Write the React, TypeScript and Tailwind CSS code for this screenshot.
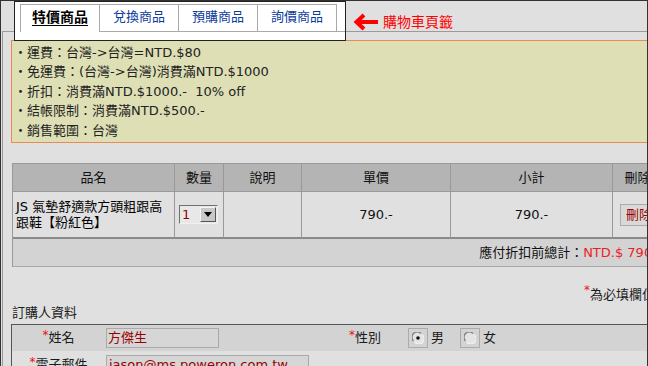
import React from "react";

const notices = [
  "・運費：台灣->台灣=NTD.$80",
  "・免運費：(台灣->台灣)消費滿NTD.$1000",
  "・折扣：消費滿NTD.$1000.-  10% off",
  "・結帳限制：消費滿NTD.$500.-",
  "・銷售範圍：台灣",
];

const tabs = ["兌換商品", "預購商品", "詢價商品"];

function Star() {
  return <span className="relative -top-[3px] text-[12px] leading-none text-[#ee1111]">*</span>;
}

function Radio({ checked }: { checked?: boolean }) {
  return (
    <span className="flex h-[20px] w-[20px] items-center justify-center border border-[#ababab]">
      <svg width="12" height="12" viewBox="0 0 12 12">
        <circle cx="6" cy="6" r="5.5" fill="#e4e4e4" />
        <path d="M1.5 9 A5 5 0 0 1 9 1.5" fill="none" stroke="#7a7a7a" strokeWidth="1.2" />
        <path d="M10.5 3 A5 5 0 0 1 3 10.5" fill="none" stroke="#f4f4f4" strokeWidth="1.2" />
        {checked && <circle cx="6" cy="6" r="1.8" fill="#111" />}
      </svg>
    </span>
  );
}

export default function App() {
  return (
    <div className="h-[366px] w-[648px] overflow-hidden border-x border-t border-[#333] bg-[#e0e0e0] font-['DejaVu_Sans','Noto_Sans_CJK_TC',sans-serif] text-[13px] text-[#1a1a1a]">
      <div className="relative z-10 flex h-[30px] items-start">
        <div className="ml-[13px] h-[40px] w-[332px] shrink-0 border border-[#222] bg-white pl-[5px] pt-[2px]">
          <div className="flex">
            <div className="flex h-[28px] w-[79px] items-center justify-center border-l border-t border-[#a9a9a9] bg-white pb-[2px] text-[14px] font-bold text-black underline underline-offset-[3px]">
              特價商品
            </div>
            {tabs.map((t, i) => (
              <div
                key={t}
                className={
                  i === tabs.length - 1
                    ? "flex h-[28px] w-[80px] items-center justify-center border-x border-y border-[#a9a9a9] pb-[2px] text-[#0b3b9c]"
                    : "flex h-[28px] w-[79px] items-center justify-center border-l border-y border-[#a9a9a9] pb-[2px] text-[#0b3b9c]"
                }
              >
                {t}
              </div>
            ))}
            <div className="h-[28px] flex-1 border-b border-[#a9a9a9]" />
          </div>
        </div>
        <div className="ml-[7px] mt-[11px] flex h-[19px] items-center gap-[4px]">
          <svg width="26" height="18" viewBox="0 0 26 18">
            <path d="M25 9 H4" stroke="#ff0000" strokeWidth="4" fill="none" />
            <path d="M11 2 L3.5 9 L11 16" stroke="#ff0000" strokeWidth="4" fill="none" strokeLinejoin="miter" />
          </svg>
          <span className="text-[14px] leading-none text-[#ff0000]">購物車頁籤</span>
        </div>
      </div>

      <div className="ml-[1px] w-[700px] border-l border-t border-[#9a9a9a] pt-[8px]">
        <div className="ml-[8px] w-[650px] border border-[#e8895a] bg-[#dedfb5] py-[2px] pl-[2px] leading-[19.4px] text-[#222]">
          {notices.map((n) => (
            <div key={n} className="whitespace-pre">{n}</div>
          ))}
        </div>

        <div className="ml-[9px] mt-[20px] w-[651px] border-l border-t border-[#999]">
          <div className="grid grid-cols-[162px_49px_78px_149px_162px_50px] bg-[#b4b4b4]">
            {["品名", "數量", "說明", "單價", "小計", "刪除"].map((h) => (
              <div key={h} className="flex h-[28px] items-center justify-center whitespace-nowrap border-b border-r border-[#999] text-[#111]">
                {h}
              </div>
            ))}
          </div>
          <div className="grid grid-cols-[162px_49px_78px_149px_162px_50px]">
            <div className="flex h-[47px] flex-col justify-center border-b-2 border-r border-b-[#8a8a8a] border-r-[#999] pl-[3px] leading-[16px] text-black">
              <div>JS 氣墊舒適款方頭粗跟高</div>
              <div>跟鞋【粉紅色】</div>
            </div>
            <div className="flex h-[47px] items-center border-b-2 border-r border-b-[#8a8a8a] border-r-[#999] pl-[4px]">
              <div className="flex h-[19px] w-[39px] items-center border border-b-[#f0f0f0] border-l-[#707070] border-r-[#f0f0f0] border-t-[#707070] bg-[#e8e8e8]">
                <span className="flex-1 pl-[2px] leading-none text-[#990000]">1</span>
                <span className="mr-[1px] flex h-[15px] w-[16px] items-center justify-center border border-b-[#555] border-l-[#f4f4f4] border-r-[#555] border-t-[#f4f4f4] bg-[#c8c8c8]">
                  <svg width="8" height="5" viewBox="0 0 8 5">
                    <path d="M0 0 H8 L4 5 Z" fill="#000" />
                  </svg>
                </span>
              </div>
            </div>
            <div className="h-[47px] border-b-2 border-r border-b-[#8a8a8a] border-r-[#999]" />
            <div className="flex h-[47px] items-center justify-center border-b-2 border-r border-b-[#8a8a8a] border-r-[#999] text-[#111]">790.-</div>
            <div className="flex h-[47px] items-center justify-center border-b-2 border-r border-b-[#8a8a8a] border-r-[#999] text-[#111]">790.-</div>
            <div className="flex h-[47px] items-center border-b-2 border-r border-b-[#8a8a8a] border-r-[#999] pl-[7px]">
              <span className="flex h-[22px] items-center whitespace-nowrap border border-[#ababab] bg-[#d9d9d9] px-[5px] text-[#a00000]">刪除</span>
            </div>
          </div>
          <div className="flex h-[28px] items-center justify-end whitespace-nowrap border-b border-[#aaa] bg-[#d3d3d3] pr-[2px]">
            <span className="text-[#111]">應付折扣前總計：</span>
            <span className="text-[#ee1c25]">NTD.$ 790.-</span>
          </div>
        </div>

        <div className="ml-[9px] mt-[20px] flex w-[651px] justify-end pr-[8px] leading-[16px]">
          <Star />
          <span>為必填欄位</span>
        </div>
        <div className="ml-[9px] mt-[2px] leading-[16px]">訂購人資料</div>

        <div className="ml-[8px] mt-[3px] w-[680px] border-l border-t border-[#555]">
          <div className="flex h-[26px] items-center bg-[#d3d3d3]">
            <div className="flex w-[93px] items-center justify-center">
              <Star />
              <span>姓名</span>
            </div>
            <div className="w-[220px] pl-[1px]">
              <div className="flex h-[20px] w-[113px] items-center border border-[#aaa] bg-[#d6d6d6] pl-[1px] text-[#990000]">方傑生</div>
            </div>
            <div className="flex w-[80px] items-center justify-center">
              <Star />
              <span>性別</span>
            </div>
            <div className="flex items-center pl-[3px]">
              <Radio checked />
              <span className="ml-[3px]">男</span>
              <span className="ml-[16px]">
                <Radio />
              </span>
              <span className="ml-[3px]">女</span>
            </div>
          </div>
          <div className="flex h-[27px] items-center bg-[#e0e0e0]">
            <div className="flex w-[93px] items-center justify-center">
              <Star />
              <span>電子郵件</span>
            </div>
            <div className="w-[220px] pl-[1px]">
              <div className="flex h-[20px] w-[203px] items-center border border-[#aaa] bg-[#d6d6d6] pl-[2px] text-[#990000]">jason@ms.poweron.com.tw</div>
            </div>
          </div>
        </div>
      </div>
    </div>
  );
}
